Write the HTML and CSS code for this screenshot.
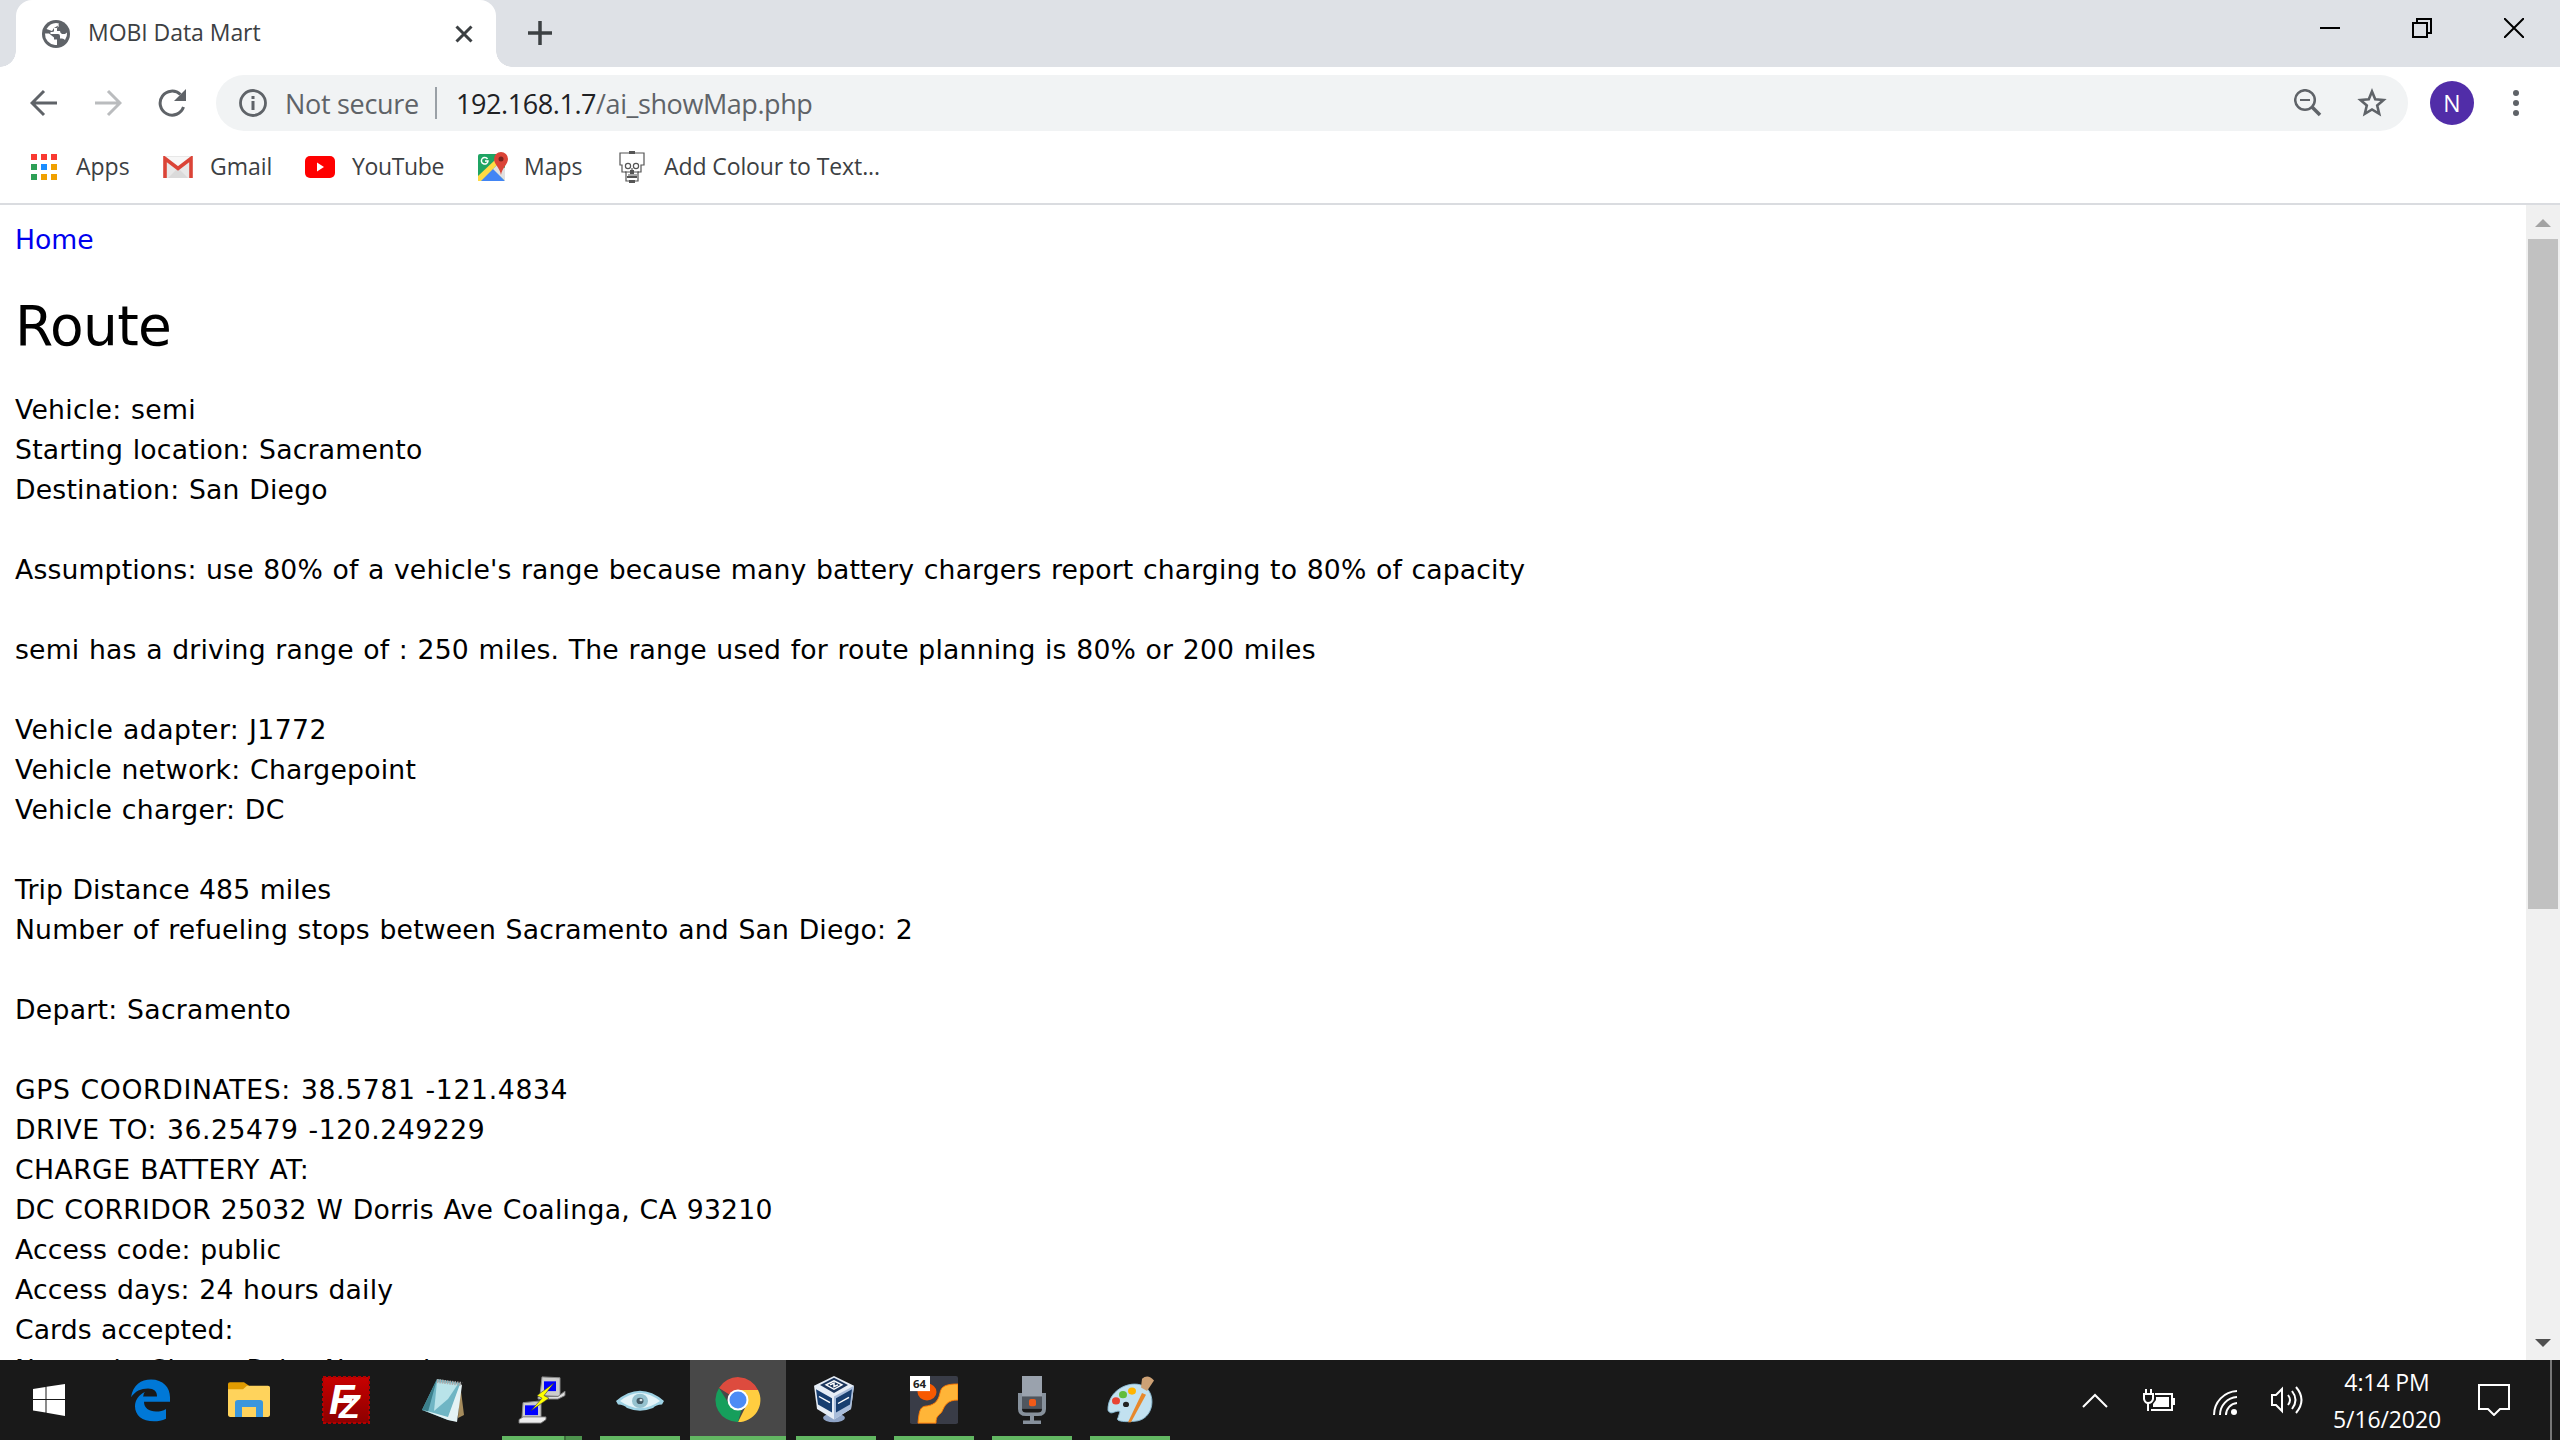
FILE: index.html
```html
<!DOCTYPE html>
<html lang="en"><head><meta charset="utf-8"><title>MOBI Data Mart</title><link rel="stylesheet" href="styles.css"></head>
<body>
<header class="browser">
<div class="tabstrip">
<div class="tab">
<svg class="globe" width="28" height="28" viewBox="0 0 28 28"><circle cx="14" cy="14" r="14" fill="#5f6368"/><path d="M17 3.500V5Q17 7 15 8H12V11Q12 12 10 12H8.500V14H16Q18 14 18 16V18.500H20Q22 18.500 23 20Q25.500 16 25 12.500L23 14H20Q18 13 18 11H15V8.500M3 13.500H7L12 17.500V19.500H15V25H13A11 11 0 0 1 3 13.500ZM14 3Q8 3 4.500 9L10 11L12 8L17 5V3.500Z" fill="#fff"/></svg>
<span class="tab-title">MOBI Data Mart</span>
<svg class="tab-close" width="18" height="18" viewBox="0 0 18 18"><path d="M1.500 1.500L16.500 16.500M16.500 1.500L1.500 16.500" stroke="#3c4043" stroke-width="3"/></svg>
</div>
<svg class="newtab" width="24" height="24" viewBox="0 0 24 24"><path d="M12 0V24M0 12H24" stroke="#3c4043" stroke-width="3.500"/></svg>
<div class="winctl">
<svg width="20" height="20"><path d="M0 10H20" stroke="#000" stroke-width="2"/></svg>
<svg width="20" height="20"><path d="M1 5H15V19H1ZM5 5V1H19V15H15" fill="none" stroke="#000" stroke-width="2"/></svg>
<svg width="20" height="20"><path d="M0 0L20 20M20 0L0 20" stroke="#000" stroke-width="2"/></svg>
</div>
</div>
<div class="toolbar">
<svg class="nav" width="28" height="28" viewBox="0 0 28 28"><path d="M27 14H3M14 2L2 14L14 26" fill="none" stroke="#5f6368" stroke-width="3"/></svg>
<svg class="nav" width="28" height="28" viewBox="0 0 28 28"><path d="M1 14H25M14 2L26 14L14 26" fill="none" stroke="#babcbe" stroke-width="3"/></svg>
<svg class="nav" width="28" height="28" viewBox="0 0 28 28"><path d="M25.500 18A12 12 0 1 1 22.500 5.500" fill="none" stroke="#5f6368" stroke-width="3"/><path d="M28 0V12H16Z" fill="#5f6368"/></svg>
<div class="omnibox">
<svg width="28" height="28" viewBox="0 0 28 28"><circle cx="14" cy="14" r="12.500" fill="none" stroke="#5f6368" stroke-width="2.800"/><path d="M14 12V21M14 7V10" stroke="#5f6368" stroke-width="3"/></svg>
<span class="secure">Not secure</span><i class="sep"></i><span class="url"><b>192.168.1.7</b>/ai_showMap.php</span>
<svg class="mag" width="28" height="28" viewBox="0 0 28 28"><circle cx="11" cy="11" r="9.800" fill="none" stroke="#5f6368" stroke-width="2.500"/><path d="M6 11H16" stroke="#5f6368" stroke-width="2"/><path d="M18 18L26 26" stroke="#5f6368" stroke-width="3.500"/></svg>
<svg class="star" width="30" height="30" viewBox="0 0 30 30"><path d="M15 3.500L18.200 11.300L26.500 12L20.200 17.500L22.200 25.800L15 21.400L7.800 25.800L9.800 17.500L3.500 12L11.800 11.300Z" fill="none" stroke="#5f6368" stroke-width="2.600"/></svg>
</div>
<div class="avatar">N</div>
<svg class="dots" width="6" height="28"><g fill="#5f6368"><circle cx="3" cy="4" r="3"/><circle cx="3" cy="14" r="3"/><circle cx="3" cy="24" r="3"/></g></svg>
</div>
<nav class="bookmarks">
<div class="bm apps"><svg width="26" height="26"><path d="M0 0H6V6H0ZM10 0H16V6H10ZM20 0H26V6H20Z" fill="#f93a32"/><path d="M0 10H6V16H0ZM0 20H6V26H0Z" fill="#2d9f56"/><path d="M20 10H26V16H20ZM10 20H16V26H10ZM20 20H26V26H20Z" fill="#f0a000"/><path d="M10 10H16V16H10Z" fill="#1a8cff"/></svg><span>Apps</span></div>
<div class="bm gmail"><svg width="30" height="22" viewBox="0 0 30 22"><rect x="1" y="0" width="28" height="22" rx="2" fill="#e8e8e8"/><path d="M5 22L15 12L25 22Z" fill="#dadada"/><path d="M3 1H27L15 10Z" fill="#f7f7f7"/><path d="M2 22V2.500L15 12.500L28 2.500V22" fill="none" stroke="#db4437" stroke-width="3.600"/></svg><span>Gmail</span></div>
<div class="bm yt"><svg width="30" height="22" viewBox="0 0 30 22"><rect width="30" height="22" rx="5" fill="#f00"/><path d="M12 6.500L19 11L12 15.500Z" fill="#fff"/></svg><span>YouTube</span></div>
<div class="bm maps"><svg width="30" height="30" viewBox="0 0 30 30"><rect y="2" width="27" height="27" rx="2" fill="#1fa463"/><path d="M0 29L14 15L27 29Z" fill="#4285f4"/><path d="M0 24L17 8L20 12L3 29H0Z" fill="#ffda43"/><path d="M15 17L27 29V16L20 12Z" fill="#e1e1e1"/><path d="M16 7A7 7 0 0 1 30 7C30 12 24 16 23 23C22 16 16 12 16 7Z" fill="#db4437"/><circle cx="23" cy="7" r="2.500" fill="#7b231e"/><path d="M9.500 7A3.300 3.300 0 1 0 10 9H7" fill="none" stroke="#fff" stroke-width="1.500"/></svg><span>Maps</span></div>
<div class="bm color"><svg width="26" height="32" viewBox="0 0 26 32"><g fill="none" stroke="#555" stroke-width="1.200"><path d="M1 2H25V14H22V21H19V30H7V21H3V14H1Z"/><circle cx="9" cy="15" r="2.600"/><circle cx="17" cy="15" r="2.600"/><path d="M13 17V22M6 21H20M9 24H18"/></g><path d="M10 0H16V3H10ZM11 19H15V23H11ZM8 25H18V27H8ZM10 29H16V32H10Z" fill="#555"/></svg><span>Add Colour to Text...</span></div>
</nav>
</header>
<main class="viewport">
<article class="page">
<a class="home">Home</a>
<h1>Route</h1>
<p><span class="t27">Vehicle: semi</span><span class="t22">Starting location: Sacramento</span><span class="t20">Destination: San Diego</span></p>
<p><span class="t15">Assumptions: use 80% of a vehicle's range because many battery chargers report charging to 80% of capacity</span></p>
<p><span class="t18">semi has a driving range of : 250 miles. The range used for route planning is 80% or 200 miles</span></p>
<p><span class="t42">Vehicle adapter: J1772</span><span class="t22">Vehicle network: Chargepoint</span><span class="t27">Vehicle charger: DC</span></p>
<p><span class="t08">Trip Distance 485 miles</span><span class="t18">Number of refueling stops between Sacramento and San Diego: 2</span></p>
<p><span class="t27">Depart: Sacramento</span></p>
<p><span class="t64">GPS COORDINATES: 38.5781 -121.4834</span><span class="t55">DRIVE TO: 36.25479 -120.249229</span><span class="t42">CHARGE BATTERY AT:</span><span class="t27">DC CORRIDOR 25032 W Dorris Ave Coalinga, CA 93210</span><span class="t15">Access code: public</span><span class="t18">Access days: 24 hours daily</span><span class="t08">Cards accepted:</span><span class="t42">Network: ChargePoint Network</span></p>
</article>
<aside class="scrollbar"><svg width="16" height="8"><path d="M0 8L8 0L16 8Z" fill="#a3a3a3"/></svg><div class="thumb"></div><svg class="down" width="16" height="8"><path d="M0 0L8 8L16 0Z" fill="#505050"/></svg></aside>
</main>
<footer class="taskbar">
<div class="task"><svg viewBox="3 4 48 48"><path d="M8 17L20.500 15V27H8ZM21.500 14.800L40 12V27H21.500ZM8 28H20.500V40.500L8 38.500ZM21.500 28H40V44L21.500 40.700Z" fill="#fff"/></svg></div>
<div class="task"><svg viewBox="-1 3 48 54" preserveAspectRatio="none"><path d="M4 27C6 13 14 7 24 7C36 7 43 16 43 27V32H17C17 39 22 43 29 43C33 43 36 42 39 40V51C35 53 31 54 27 54C15 54 8 47 8 37C8 30 12 24 18 21C16 23 17 25 16 26H30C30 20 27 17 21 17C14 17 8 20 4 27Z" fill="#0078d7"/></svg></div>
<div class="task"><svg viewBox="-1 3 48 54" preserveAspectRatio="none"><path d="M3 12Q3 10 5 10H19L24 14V20H3Z" fill="#e09b00"/><path d="M3 18H18L22 14H43Q45 14 45 16V47Q45 49 43 49H5Q3 49 3 47Z" fill="#ffd35c"/><path d="M10 49V33Q10 30 13 30H35Q38 30 38 33V49H31V38H17V49Z" fill="#3a96dd"/></svg></div>
<div class="task"><svg viewBox="0 0 48 48"><defs><linearGradient id="red" x2="0" y2="1"><stop stop-color="#c80000"/><stop offset="1" stop-color="#8c0000"/></linearGradient></defs><rect x="1" y="1" width="46" height="46" fill="url(#red)" stroke="#b30000" stroke-width="2" stroke-dasharray="3 2"/><text x="7" y="38" class="fz" font-size="42">F</text><text x="17" y="42" class="fz" font-size="34">Z</text></svg></div>
<div class="task"><svg viewBox="0 7 48 48"><path d="M40 14L44 46L38 49Z" fill="#a58b5c"/><path d="M17 10L40 14L36 52L28 51L2 41Z" fill="#6fb5c4"/><path d="M17 10L8 43L2 41Z" fill="#3b7f8b"/><path d="M17 13L38 15L28 30L14 42Z" fill="#b9e3e9"/><path d="M3 41L28 48L40 15L42 16L37 53L28 51Z" fill="#e4f2f4"/><path d="M17 12L42 15" stroke="#aaa" stroke-width="4" stroke-dasharray="1.500 1"/></svg></div>
<div class="task run split"><svg viewBox="0 3 48 54" preserveAspectRatio="none"><path d="M24 4L42 5V26L22 25Z" fill="#ccc" stroke="#888"/><path d="M26 9H38V20H26Z" fill="#00f"/><path d="M20 26H40L47 20V25L40 29H20Z" fill="#ddd" stroke="#777"/><path d="M5 33L23 31V50H4Z" fill="#ccc" stroke="#888"/><path d="M7 36H20V47H7Z" fill="#00f"/><path d="M1 52L5 49H28V52L23 56H1Z" fill="#eee" stroke="#777"/><path d="M36 11L19 25L24 28L13 42L31 28L26 25Z" fill="#ff0" stroke="#333" stroke-width=".6"/></svg></div>
<div class="task run"><svg viewBox="0 3 48 54" preserveAspectRatio="none"><path d="M0 31Q24 8 48 31L46 35Q40 35 37 39Q24 45 11 39Q8 35 2 35Z" fill="#9ed2e4"/><path d="M4 31Q24 13 44 31Q24 47 4 31Z" fill="#e4f4f9"/><circle cx="24" cy="31" r="8" fill="#95c2cf"/><circle cx="24" cy="31" r="3.500" fill="#445a65"/><circle cx="25" cy="30" r="1.500" fill="#dce9ed"/></svg></div>
<div class="task run active"><svg viewBox="0 5 48 48"><path d="M24 29L5 17A22 22 0 0 1 44 19H24Z" fill="#dd4b3e"/><path d="M24 19H44A22 22 0 0 1 24 51L33 33Z" fill="#ffcd40"/><path d="M5 17L15 33L28 37L24 51A22 22 0 0 1 5 17Z" fill="#169f5c"/><circle cx="24" cy="29" r="10.500" fill="#fff"/><circle cx="24" cy="29" r="8.500" fill="#4c8bf5"/></svg></div>
<div class="task run"><svg viewBox="2 3 48 54" preserveAspectRatio="none"><ellipse cx="24" cy="50" rx="11" ry="5" fill="#8fa4c6"/><path d="M24 3L44 14L41 40L24 52L7 40L4 14Z" fill="#e6edf6"/><path d="M24 52V26L44 14L41 40Z" fill="#a9bddb"/><path d="M24 5L38 13L24 22L10 13Z" fill="#1b355c"/><path d="M6 18L22 28V44L8 35ZM26 28L42 18L40 35L26 44Z" fill="#173e70"/><path d="M16 13L24 8.500L32 13L24 18ZM20 13L24 11V15L28 13M9 26L20 33M28 34L39 27" fill="none" stroke="#fff" stroke-width="1.500"/></svg></div>
<div class="task run"><svg viewBox="0 3 48 54" preserveAspectRatio="none"><rect y="3" width="48" height="54" rx="2" fill="#393c47"/><circle cx="17" cy="21" r="9.500" fill="#f75900"/><path d="M8 56C9 43 10 38 15 37C23 36 28 33 30 22C31 14 37 12 48 12V30C37 30 35 36 32 43C29 48 26 47 26 56Z" fill="#ffb538" stroke="#ff7900"/><rect y="3" width="20" height="17" fill="#fff"/><text x="3" y="16.500" class="ic">64</text></svg></div>
<div class="task run"><svg viewBox="0 3 48 54" preserveAspectRatio="none"><path d="M12 22V40Q12 46 18 46H30Q36 46 36 40V22M24 46V54M15 55H33" fill="none" stroke="#87919c" stroke-width="4"/><rect x="14" y="3" width="20" height="24" fill="#9aa2ad"/><rect x="14" y="26" width="20" height="14" fill="#50565e"/><rect x="21" y="29" width="7" height="8" rx="2" fill="#f15a18"/></svg></div>
<div class="task run"><svg viewBox="0 3 48 54" preserveAspectRatio="none"><path d="M2 42C1 20 23 7 37 14C51 21 49 53 28 54C19 55 9 54 12 50L14 43C11 41 6 46 4 44Z" fill="#c2e1f0" stroke="#88b8cf"/><circle cx="20" cy="35" r="3" fill="#222"/><circle cx="10" cy="31" r="4" fill="#e84332"/><circle cx="17" cy="24" r="4" fill="#61bd3b"/><circle cx="26" cy="20" r="4" fill="#ffb400"/><path d="M36 22L40 24L25 55L22 55Z" fill="#e7882c"/><path d="M36 6Q42 0 48 8L41 20L35 16Z" fill="#cda175"/></svg></div>
<div class="tray">
<svg class="t-up" width="26" height="15" viewBox="0 0 26 15"><path d="M1 14L13 2L25 14" fill="none" stroke="#fff" stroke-width="2"/></svg>
<svg class="t-bat" width="32" height="22" viewBox="0 0 32 22"><path d="M12 5H29V21H8" fill="none" stroke="#fff" stroke-width="2"/><path d="M13 8H26V18H10V15L13 11ZM29 9H32V16H29Z" fill="#fff"/><path d="M3 0V5M8 0V5M0 5H11M5 13V22" stroke="#fff" stroke-width="2"/><path d="M1 5V10Q2 14 5 14Q9 14 10 10V5" fill="none" stroke="#fff" stroke-width="2"/></svg>
<svg class="t-wifi" width="25" height="25" viewBox="0 0 25 25"><g fill="none" stroke="#fff" stroke-width="2"><path d="M1 25A24 24 0 0 1 24 1M7 25A18 18 0 0 1 24 7M13 25A12 12 0 0 1 24 13"/></g><circle cx="21" cy="22" r="3" fill="#fff"/></svg>
<svg class="t-vol" width="32" height="28" viewBox="0 0 32 28"><path d="M1 9H5L11 3V25L5 19H1ZM17 9Q21 14 17 19M21 5Q28 14 21 23M25 1Q36 14 25 27" fill="none" stroke="#fff" stroke-width="2"/></svg>
<div class="clock"><div>4:14 PM</div><div>5/16/2020</div></div>
<svg class="t-note" width="32" height="32" viewBox="0 0 32 32"><path d="M1 1H31V25H22L16 31L10 25H1Z" fill="none" stroke="#fff" stroke-width="2"/></svg>
<i class="desk"></i>
</div>
</footer>
</body></html>
```
FILE: styles.css
```css
*{box-sizing:border-box}
body{margin:0;width:2560px;height:1440px;display:flex;flex-direction:column;overflow:hidden;background:#fff;font-family:"Open Sans","Noto Sans",sans-serif}
svg{display:block;flex:none}
span{white-space:nowrap}
.browser{height:205px;flex:none;border-bottom:2px solid #dadce0}
.tabstrip{height:67px;background:#dee1e6;display:flex;align-items:flex-start;padding-left:16px}
.tab{width:480px;height:67px;background:#fff;border-radius:16px 16px 0 0;display:flex;align-items:center;padding-left:26px;position:relative}
.tab::before,.tab::after{content:"";position:absolute;bottom:0;width:16px;height:16px}
.tab::before{left:-16px;background:radial-gradient(circle at 0 0,transparent 15.500px,#fff 16px)}
.tab::after{right:-16px;background:radial-gradient(circle at 100% 0,transparent 15.500px,#fff 16px)}
.tab-title{margin-left:18px;font-size:23px;color:#3c4043;letter-spacing:-.05px;flex:1;padding-bottom:3px}
.tab-close{margin-right:23px}
.newtab{margin:21px 0 0 32px}
.winctl{margin:18px 36px 0 auto;display:flex;gap:72px}
.toolbar{height:72px;display:flex;align-items:center;padding-left:30px}
.nav{margin-right:36px}
.omnibox{width:2192px;height:56px;border-radius:28px;background:#f1f3f4;margin-left:-6px;display:flex;align-items:center;padding-left:23px}
.secure{margin-left:18px;font-size:27px;color:#5f6368;letter-spacing:-.3px}
.sep{width:2px;height:32px;background:#9aa0a6;margin:0 19px 0 16px}
.url{font-size:27px;color:#5f6368;letter-spacing:-.42px}
.url b{font-weight:400;color:#202124}
.mag{margin-left:auto;margin-right:35px}
.star{margin-right:21px}
.avatar{width:44px;height:44px;border-radius:50%;background:#512da8;color:#fff;font-size:23px;display:flex;align-items:center;justify-content:center;margin-left:22px}
.dots{margin-left:39px}
.bookmarks{height:56px;display:flex;align-items:center;color:#3c4043;font-size:23px;padding-left:31px}
.bm{display:flex;align-items:center}
.bm span{padding-bottom:2px}
.apps{width:132px}
.apps span{margin-left:19px}
.gmail{width:142px}
.gmail span{margin-left:17px}
.yt{width:173px}
.yt span{margin-left:17px;letter-spacing:-.35px}
.maps{width:141px}
.maps span{margin-left:16px}
.color span{margin-left:19px;letter-spacing:-.1px}
.viewport{height:1155px;flex:none;display:flex;overflow:hidden}
.page{flex:1;padding:15px 15px 0;font:26.670px/40px "DejaVu Sans",Verdana,sans-serif;color:#000;white-space:nowrap;word-spacing:.9px}
.page p span{display:block}
.home{display:block;color:#00e;height:40px}
h1{font-weight:400;font-size:55px;line-height:68px;letter-spacing:-.7px;margin:32px 0 30px}
p{margin:0 0 40px}
.t08{letter-spacing:.08px}
.t15{letter-spacing:.15px}
.t18{letter-spacing:.18px}
.t20{letter-spacing:.2px}
.t22{letter-spacing:.22px}
.t27{letter-spacing:.27px}
.t42{letter-spacing:.42px}
.t55{letter-spacing:.55px}
.t64{letter-spacing:.64px}
.scrollbar{width:34px;background:#f0f0f0;display:flex;flex-direction:column;align-items:center;padding:14px 0 13px}
.thumb{width:30px;height:670px;background:#c1c1c1;margin-top:12px}
.down{margin-top:auto}
.taskbar{height:80px;background:#191919;display:flex;flex:none;padding-left:3px}
.task{width:98px;height:80px;display:flex;flex-direction:column;align-items:center;padding-top:16px}
.task svg{width:48px;height:48px}
.run::after{content:"";width:80px;height:4px;margin-top:auto;background:#62b762}
.split::after{background:linear-gradient(90deg,#62b762 62px,#3c703c 62px 64px,#4d934d 64px)}
.active{width:96px;margin:0 1px;background:#484848}
.active::after{width:96px}
.ic{font:bold 11.500px "Open Sans",sans-serif;fill:#222}
.fz{font-family:"Liberation Sans",sans-serif;font-weight:bold;font-style:italic;fill:#fff}
.tray{margin-left:auto;display:flex;align-items:center;color:#fff;padding-right:8px}
.t-bat{margin-left:35px}
.t-wifi{margin:4px 0 0 38px}
.t-vol{margin-left:33px}
.clock{font-size:23px;line-height:37px;text-align:center;width:108px;margin-left:30px;padding-top:1px;letter-spacing:-.1px}
.t-note{margin-left:37px}
.desk{width:2px;height:80px;background:#777;margin-left:40px}
```
